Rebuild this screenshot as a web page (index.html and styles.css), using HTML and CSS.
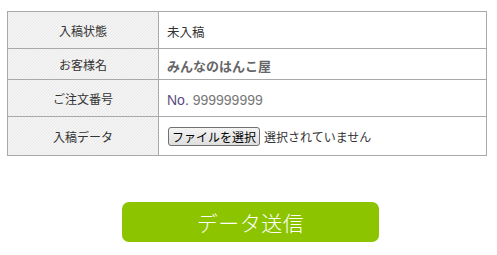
FILE: index.html
```html
<!DOCTYPE html>
<html lang="ja">
<head>
<meta charset="utf-8">
<link rel="stylesheet" href="styles.css">
</head>
<body>
<div class="page">
  <table class="info">
    <tr class="r1">
      <th>入稿状態</th>
      <td><span class="plain">未入稿</span></td>
    </tr>
    <tr class="r2">
      <th>お客様名</th>
      <td><span class="name">みんなのはんこ屋</span></td>
    </tr>
    <tr class="r3">
      <th>ご注文番号</th>
      <td><span class="order"><span class="no">No.</span> 999999999</span></td>
    </tr>
    <tr class="r4">
      <th>入稿データ</th>
      <td>
        <div class="file">
          <span class="file-btn">ファイルを選択</span>
          <span class="file-status">選択されていません</span>
        </div>
      </td>
    </tr>
  </table>
  <div class="actions">
    <button class="submit" type="button">データ送信</button>
  </div>
</div>
</body>
</html>
```
FILE: styles.css
```css
html, body {
  margin: 0;
  padding: 0;
  background: #fff;
}
body {
  font-family: "Noto Sans CJK JP", "Liberation Sans", sans-serif;
  color: #333;
}
.page {
  padding: 11px 0 0 7px;
  width: 480px;
}
.info {
  border-collapse: collapse;
  width: 480px;
  table-layout: fixed;
}
.info th,
.info td {
  border: 1px solid #a9a9a9;
  padding: 0;
  vertical-align: middle;
}
.info th {
  width: 150px;
  font-weight: normal;
  font-size: 12px;
  color: #333;
  text-align: center;
  background: repeating-linear-gradient(135deg, #ffffff 0, #ffffff 1.3px, #d2d2d2 1.3px, #d2d2d2 2.12px);
}
.info td {
  padding-left: 8px;
  text-align: left;
}
.r1 { height: 37px; }
.r2 { height: 31px; }
.r3 { height: 37px; }
.r4 { height: 39px; }
.plain {
  font-size: 12.5px;
  color: #333;
}
.name {
  font-size: 13px;
  font-weight: bold;
  color: #666;
}
.order {
  font-family: "Liberation Sans", sans-serif;
  font-size: 14px;
  color: #777;
}
.order .no {
  color: #5a4a80;
}
.file {
  display: flex;
  align-items: center;
  gap: 4px;
}
.file-btn {
  box-sizing: border-box;
  height: 19px;
  width: 92px;
  display: inline-flex;
  align-items: center;
  justify-content: center;
  font-size: 12px;
  color: #000;
  border: 1px solid #707070;
  border-radius: 3px;
  background: linear-gradient(#f4f4f4, #dedede);
  margin-left: 1px;
}
.file-status {
  font-size: 12px;
  color: #333;
}
.actions {
  display: flex;
  padding-left: 115px;
  margin-top: 46px;
}
.submit {
  width: 257px;
  height: 40px;
  border: none;
  border-radius: 7px;
  background: #8dc400;
  color: #fff;
  font-family: "Noto Sans CJK JP", sans-serif;
  font-weight: 300;
  font-size: 21px;
  padding: 0;
  letter-spacing: 0.5px;
}
```
